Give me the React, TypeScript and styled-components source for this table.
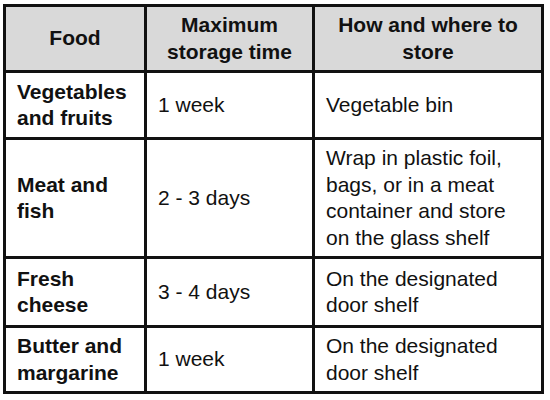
import React from 'react'
import styled, { createGlobalStyle } from 'styled-components'

const GlobalStyle = createGlobalStyle`
  html, body {
    margin: 0;
    padding: 0;
    background: #ffffff;
  }
  body {
    font-family: "Liberation Sans", Arial, sans-serif;
    color: #111111;
  }
`

const Page = styled.div`
  padding: 4px 0 0 3px;
`

const Table = styled.table`
  border-collapse: collapse;
  table-layout: fixed;
  width: 541px;
  border: 3px solid #111111;
  font-size: 21px;
  line-height: 26.5px;
`

const HeadCell = styled.th`
  background: #d9d9d9;
  border: 3px solid #111111;
  padding: 0 10px;
  font-weight: 700;
  text-align: center;
  vertical-align: middle;
`

const Cell = styled.td<{ $bold?: boolean }>`
  border: 3px solid #111111;
  padding: 0 14px 0 11px;
  font-weight: ${props => (props.$bold ? 700 : 400)};
  text-align: left;
  vertical-align: middle;
`

const Row = styled.tr<{ $h: number }>`
  height: ${props => props.$h}px;
`

type FoodRow = {
  food: string
  time: string
  how: string
  height: number
}

const rows: FoodRow[] = [
  { food: 'Vegetables and fruits', time: '1 week', how: 'Vegetable bin', height: 67 },
  {
    food: 'Meat and fish',
    time: '2 - 3 days',
    how: 'Wrap in plastic foil, bags, or in a meat container and store on the glass shelf',
    height: 119,
  },
  { food: 'Fresh cheese', time: '3 - 4 days', how: 'On the designated door shelf', height: 69 },
  { food: 'Butter and margarine', time: '1 week', how: 'On the designated door shelf', height: 66 },
]

const App: React.FC = () => {
  return (
    <>
      <GlobalStyle />
      <Page>
        <Table>
          <colgroup>
            <col style={{ width: 141 }} />
            <col style={{ width: 168 }} />
            <col style={{ width: 229 }} />
          </colgroup>
          <thead>
            <Row $h={66}>
              <HeadCell>Food</HeadCell>
              <HeadCell>Maximum storage time</HeadCell>
              <HeadCell>How and where to store</HeadCell>
            </Row>
          </thead>
          <tbody>
            {rows.map(row => (
              <Row key={row.food} $h={row.height}>
                <Cell $bold>{row.food}</Cell>
                <Cell>{row.time}</Cell>
                <Cell>{row.how}</Cell>
              </Row>
            ))}
          </tbody>
        </Table>
      </Page>
    </>
  )
}

export default App
